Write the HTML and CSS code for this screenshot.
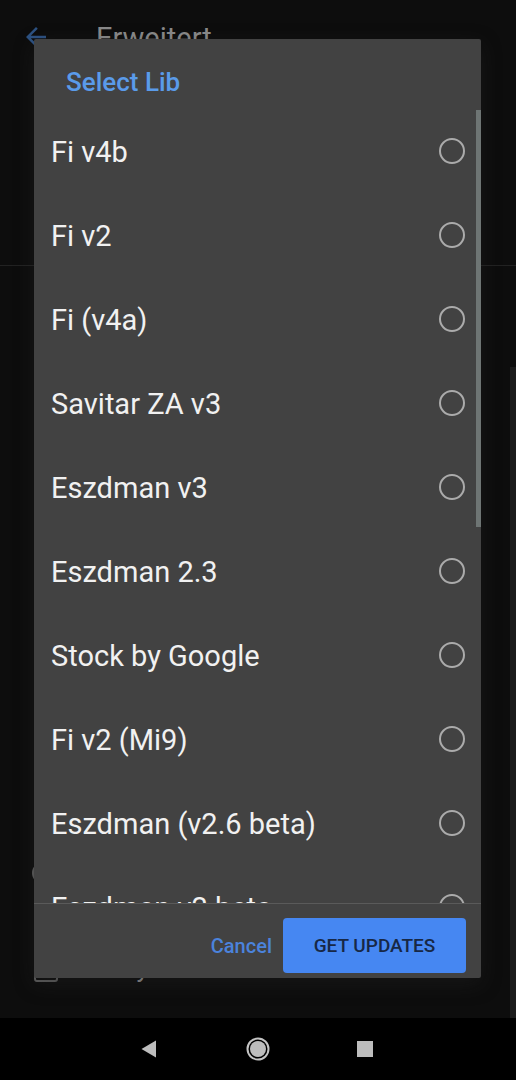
FILE: index.html
```html
<!DOCTYPE html>
<html>
<head>
<meta charset="utf-8">
<link rel="stylesheet" href="styles.css">
</head>
<body>
<div class="screen">
  <div class="page">
    <header class="appbar">
      <svg class="back" viewBox="0 0 24 24" width="30" height="30"><path d="M20 11H7.83l5.59-5.59L12 4l-8 8 8 8 1.41-1.41L7.83 13H20v-2z" fill="#2d5283"/></svg>
      <span class="appbar-title">Erweitert</span>
    </header>
    <div class="bg-section first">
      <span class="bg-check"></span>
    </div>
    <div class="bg-divider"></div>
    <div class="bg-section second">
      <span class="bg-check"></span>
    </div>
    <div class="bg-section third">
      <span class="bg-radio"></span>
    </div>
    <div class="bg-section fourth">
      <span class="bg-check"></span>
      <span class="bg-text">Only Wi-Fi</span>
    </div>
    <div class="page-scroll"></div>
  </div>

  <div class="dialog">
    <h2 class="dialog-title">Select Lib</h2>
    <div class="list">
      <div class="item"><span class="label">Fi v4b</span><span class="radio"></span></div>
      <div class="item"><span class="label">Fi v2</span><span class="radio"></span></div>
      <div class="item"><span class="label">Fi (v4a)</span><span class="radio"></span></div>
      <div class="item"><span class="label">Savitar ZA v3</span><span class="radio"></span></div>
      <div class="item"><span class="label">Eszdman v3</span><span class="radio"></span></div>
      <div class="item"><span class="label">Eszdman 2.3</span><span class="radio"></span></div>
      <div class="item"><span class="label">Stock by Google</span><span class="radio"></span></div>
      <div class="item"><span class="label">Fi v2 (Mi9)</span><span class="radio"></span></div>
      <div class="item"><span class="label">Eszdman (v2.6 beta)</span><span class="radio"></span></div>
      <div class="item"><span class="label">Eszdman v2 beta</span><span class="radio"></span></div>
      <div class="scrollbar"></div>
    </div>
    <div class="actions">
      <button class="btn-text">Cancel</button>
      <button class="btn-filled">GET UPDATES</button>
    </div>
  </div>

  <nav class="navbar">
    <svg class="nav-back" viewBox="0 0 16 18" width="16" height="18"><path d="M15 0.5 L15 17.5 L0.5 9 Z" fill="#bdbdbd"/></svg>
    <svg class="nav-home" viewBox="0 0 24 24" width="24" height="24"><circle cx="12" cy="12" r="10.5" fill="none" stroke="#c4c4c4" stroke-width="2"/><circle cx="12" cy="12" r="8" fill="#bdbdbd"/></svg>
    <span class="nav-recent"></span>
  </nav>
</div>
</body>
</html>
```

FILE: styles.css
```css
* { box-sizing: border-box; }
html, body {
  margin: 0;
  padding: 0;
  background: #0d0d0d;
  font-family: Roboto, "Noto Sans", sans-serif;
}
.screen {
  position: relative;
  width: 516px;
  height: 1080px;
  overflow: hidden;
  display: flex;
  flex-direction: column;
}
.page {
  position: relative;
  height: 1018px;
  background: #0d0d0d;
  display: flex;
  flex-direction: column;
}
.appbar {
  height: 78px;
  display: flex;
  align-items: flex-start;
  padding-top: 22px;
  flex: none;
}
.back { margin-left: 21px; }
.appbar-title {
  margin-left: 45px;
  margin-top: -1px;
  font-size: 29px;
  line-height: 34px;
  color: #8a8a8a;
}
.bg-section { display: flex; align-items: flex-start; flex: none; }
.bg-section.first { height: 187px; padding-top: 9px; }
.bg-divider { height: 1px; background: #222; flex: none; }
.bg-section.second { height: 581px; padding-top: 102px; }
.bg-section.third { height: 99px; padding-top: 15px; }
.bg-section.fourth { height: 72px; padding-top: 14px; }
.bg-check {
  margin-left: 34px;
  width: 24px;
  height: 22px;
  border: 2px solid #5c5c5c;
  border-radius: 3px;
  flex: none;
}
.bg-radio {
  margin-left: 32px;
  width: 22px;
  height: 22px;
  border: 2px solid #5c5c5c;
  border-radius: 50%;
  flex: none;
}
.bg-text {
  margin-left: 40px;
  font-size: 26px;
  color: #8a8a8a;
  line-height: 30px;
  margin-top: -7px;
}
.page-scroll {
  position: absolute;
  right: 0;
  top: 367px;
  width: 6px;
  height: 651px;
  background: #1b1b1b;
}

.dialog {
  position: absolute;
  left: 34px;
  top: 39px;
  width: 447px;
  height: 939px;
  background: #424242;
  border-radius: 2px;
  display: flex;
  flex-direction: column;
  box-shadow: 0 6px 20px rgba(40,40,40,0.35);
}
.dialog-title {
  margin: 0;
  height: 71px;
  padding: 28px 0 0 32px;
  font-size: 26px;
  line-height: 30px;
  font-weight: 500;
  color: #5a9bea;
  flex: none;
}
.list {
  position: relative;
  height: 794px;
  overflow: hidden;
  flex: none;
  border-bottom: 1px solid #5a5a5a;
}
.item {
  height: 84px;
  display: flex;
  align-items: center;
  justify-content: space-between;
  padding: 0 16px 0 17px;
}
.label {
  font-size: 29px;
  color: #f1f1f1;
  line-height: 34px;
}
.radio {
  width: 26px;
  height: 26px;
  border: 2.3px solid #ababab;
  border-radius: 50%;
  flex: none;
  margin-top: -2px;
}
.scrollbar {
  position: absolute;
  right: 0;
  top: -2px;
  width: 5px;
  height: 419px;
  background: #6e7574;
}
.actions {
  flex: 1;
  display: flex;
  justify-content: flex-end;
  align-items: flex-start;
  padding: 14px 15px 0 0;
  gap: 11px;
}
.btn-text {
  height: 55px;
  background: none;
  border: none;
  padding: 0;
  font-family: inherit;
  font-size: 20px;
  font-weight: 500;
  color: #4b83dc;
}
.btn-filled {
  width: 183px;
  height: 55px;
  background: #4687f2;
  border: none;
  border-radius: 4px;
  font-family: inherit;
  font-size: 19px;
  font-weight: 500;
  color: #172846;
  padding: 0;
}

.navbar {
  height: 62px;
  background: #000;
  display: flex;
  align-items: center;
  padding-bottom: 1px;
  flex: none;
}
.nav-back { margin-left: 141px; }
.nav-home { margin-left: 89px; }
.nav-recent {
  margin-left: 87px;
  width: 16px;
  height: 16px;
  background: #bdbdbd;
}
```
